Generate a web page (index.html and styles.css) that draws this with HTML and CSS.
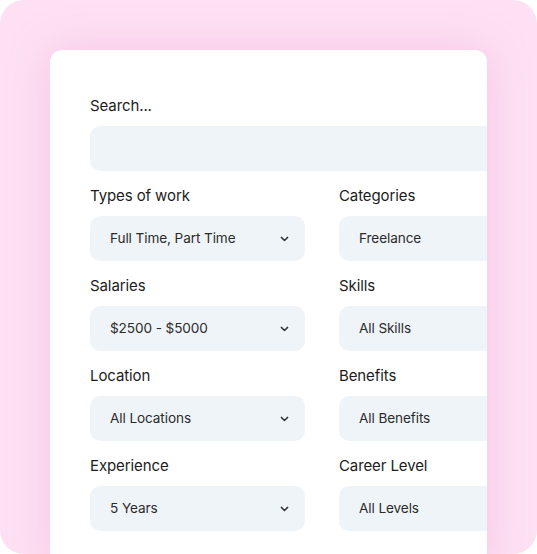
FILE: index.html
```html
<!DOCTYPE html>
<html>
<head>
<meta charset="utf-8">
<link rel="stylesheet" href="styles.css">
</head>
<body>
<div class="frame">
  <div class="card">
    <div class="form">
      <div class="field full">
        <div class="label">Search...</div>
        <div class="input"></div>
      </div>
      <div class="field">
        <div class="label">Types of work</div>
        <div class="input select"><span>Full Time, Part Time</span><svg class="chev" viewBox="0 0 10 6"><path d="M1.5 1.2 L5 4.6 L8.5 1.2"/></svg></div>
      </div>
      <div class="field">
        <div class="label">Categories</div>
        <div class="input select"><span>Freelance</span><svg class="chev" viewBox="0 0 10 6"><path d="M1.5 1.2 L5 4.6 L8.5 1.2"/></svg></div>
      </div>
      <div class="field">
        <div class="label">Salaries</div>
        <div class="input select"><span>$2500 - $5000</span><svg class="chev" viewBox="0 0 10 6"><path d="M1.5 1.2 L5 4.6 L8.5 1.2"/></svg></div>
      </div>
      <div class="field">
        <div class="label">Skills</div>
        <div class="input select"><span>All Skills</span><svg class="chev" viewBox="0 0 10 6"><path d="M1.5 1.2 L5 4.6 L8.5 1.2"/></svg></div>
      </div>
      <div class="field">
        <div class="label">Location</div>
        <div class="input select"><span>All Locations</span><svg class="chev" viewBox="0 0 10 6"><path d="M1.5 1.2 L5 4.6 L8.5 1.2"/></svg></div>
      </div>
      <div class="field">
        <div class="label">Benefits</div>
        <div class="input select"><span>All Benefits</span><svg class="chev" viewBox="0 0 10 6"><path d="M1.5 1.2 L5 4.6 L8.5 1.2"/></svg></div>
      </div>
      <div class="field">
        <div class="label">Experience</div>
        <div class="input select"><span>5 Years</span><svg class="chev" viewBox="0 0 10 6"><path d="M1.5 1.2 L5 4.6 L8.5 1.2"/></svg></div>
      </div>
      <div class="field">
        <div class="label">Career Level</div>
        <div class="input select"><span>All Levels</span><svg class="chev" viewBox="0 0 10 6"><path d="M1.5 1.2 L5 4.6 L8.5 1.2"/></svg></div>
      </div>
    </div>
  </div>
</div>
</body>
</html>
```
FILE: styles.css
```css
* { box-sizing: border-box; }
html, body { margin: 0; padding: 0; background: #ffffff; }
body { font-family: "Inter", "Roboto", sans-serif; }

.frame {
  width: 537px;
  height: 554px;
  background: #fde0f3;
  border-radius: 24px;
  overflow: hidden;
  padding: 50px 50px 0 50px;
}

.card {
  width: 437px;
  height: 520px;
  background: #ffffff;
  border-radius: 12px;
  overflow: hidden;
  padding: 45px 0 0 40px;
  box-shadow: 0 0 40px rgba(236, 150, 205, 0.35);
}

.form {
  width: 464px;
  display: grid;
  grid-template-columns: 215px 215px;
  column-gap: 34px;
  row-gap: 14px;
}

.field.full { grid-column: 1 / span 2; }

.label {
  font-size: 15px;
  line-height: 22px;
  color: #1c1c1c;
  margin-bottom: 9px;
  letter-spacing: -0.1px;
}

.input {
  height: 45px;
  background: #eff4f9;
  border-radius: 10px;
}

.select {
  display: flex;
  align-items: center;
  justify-content: space-between;
  padding: 0 16px 2px 20px;
  font-size: 13.6px;
  color: #2b2b2b;
  letter-spacing: -0.1px;
}

.chev {
  width: 9px;
  height: 6px;
  margin-top: 2px;
  fill: none;
  stroke: #333333;
  stroke-width: 1.6;
  stroke-linecap: round;
  stroke-linejoin: round;
}
```
